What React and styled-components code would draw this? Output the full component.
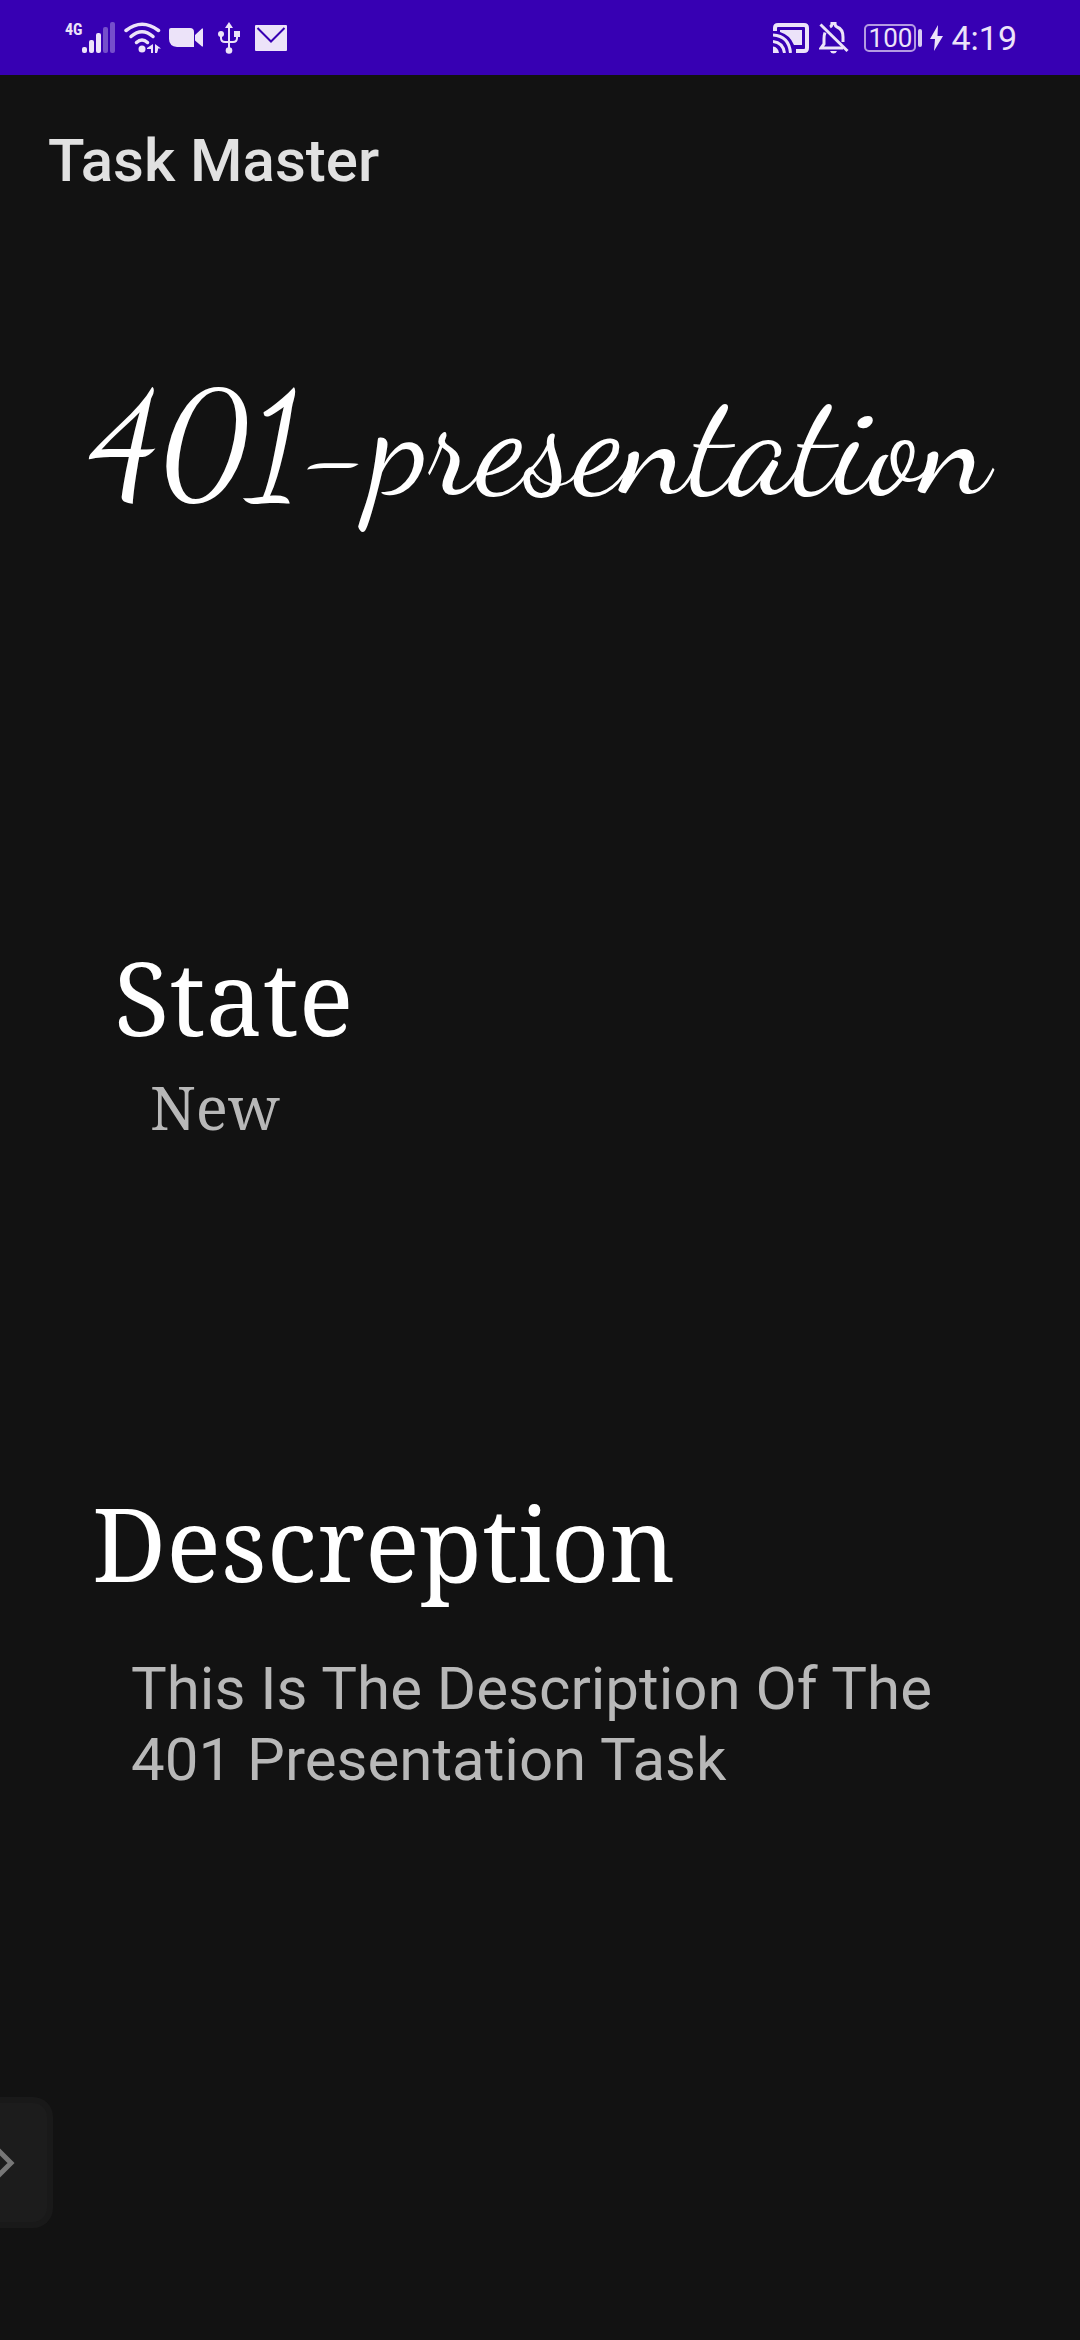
import React from "react";
import styled, { createGlobalStyle } from "styled-components";

const GlobalStyle = createGlobalStyle`
  *, *::before, *::after { box-sizing: border-box; }
  body { margin: 0; background: #121212; }
  h1, h2, p { margin: 0; font-weight: 400; }
`;

const ink = "#ece3f9";

const Screen = styled.div`
  position: relative;
  display: flex;
  flex-direction: column;
  min-height: 100vh;
  background: #121212;
  color: #fff;
  font-family: Roboto, "Open Sans", sans-serif;
`;

const StatusBar = styled.div`
  display: flex;
  align-items: center;
  justify-content: space-between;
  height: 75px;
  padding: 0 63px 0 65px;
  background: #3700b3;
  color: ${ink};
`;

const Group = styled.div`
  display: flex;
  align-items: center;
  gap: ${(p) => p.$gap}px;
`;

const Signal = styled.div`
  display: flex;
  align-items: flex-start;
  height: 32px;
`;

const Network = styled.span`
  width: 17px;
  font-family: "Roboto Condensed", Roboto, sans-serif;
  font-size: 16px;
  font-weight: 700;
  line-height: 16px;
`;

const Icon = styled.svg`
  display: block;
  flex: none;
`;

const Battery = styled.span`
  display: flex;
  align-items: center;
  justify-content: center;
  width: 52px;
  height: 28px;
  border: 2px solid #b49be2;
  border-radius: 5px;
  font-size: 26px;
  line-height: 26px;
`;

const BatteryTip = styled.span`
  width: 4px;
  height: 18px;
  border-radius: 2px;
  background: #d9ccf2;
`;

const Clock = styled.time`
  font-size: 34px;
  line-height: 40px;
`;

const AppBar = styled.header`
  display: flex;
  align-items: center;
  height: 172px;
  padding: 0 48px;
`;

const AppTitle = styled.h1`
  font-size: 60px;
  font-weight: 500;
  line-height: 70px;
  color: #e1e1e1;
`;

const TaskTitle = styled.h2`
  padding: 114px 90px 0;
  font-family: "Dancing Script", cursive;
  font-size: 144px;
  line-height: 168px;
  white-space: nowrap;
`;

const Section = styled.section`
  padding: ${(p) => p.$top}px 88px 0 ${(p) => p.$left}px;
`;

const SectionTitle = styled.h2`
  font-family: "Noto Serif", "Droid Serif", "DejaVu Serif", serif;
  font-size: 102px;
  line-height: 140px;
`;

const Value = styled.p`
  padding: ${(p) => p.$top}px 0 0 ${(p) => p.$indent}px;
  font-family: ${(p) =>
    p.$serif ? '"Noto Serif", "Droid Serif", "DejaVu Serif", serif' : "inherit"};
  font-size: 60px;
  line-height: 71px;
  color: #b8b8b8;
`;

const Handle = styled.button`
  position: absolute;
  left: 0;
  bottom: 112px;
  display: flex;
  align-items: center;
  width: 53px;
  height: 131px;
  padding: 0;
  border: 6px solid #191919;
  border-left: 0;
  border-radius: 0 20px 20px 0;
  background: #1c1c1c;
`;

function SignalIcon() {
  return (
    <Icon width="34" height="32" viewBox="0 0 34 32" fill={ink}>
      <rect x="0" y="25" width="5" height="6" rx="2" />
      <rect x="7" y="18" width="5" height="13" rx="2" />
      <rect x="14" y="11" width="5" height="20" rx="2" />
      <rect x="21" y="5" width="5" height="26" rx="2" opacity=".35" />
      <rect x="28" y="0" width="5" height="31" rx="2" opacity=".35" />
    </Icon>
  );
}

function WifiIcon() {
  return (
    <Icon width="37" height="32" viewBox="0 0 37 32" fill="none" stroke={ink} strokeWidth="3.500" strokeLinecap="round">
      <path d="M2 8.500Q18-4 34.500 8.500" />
      <path d="M7 14.500Q18 5 29 14.500" />
      <path d="M12.500 20.500Q18 15.500 23.500 20.500" />
      <circle cx="18" cy="27" r="3.500" fill={ink} stroke="none" />
      <path d="M29 22v9h-2v-4h-4v-1zM31 22l6 4.500h-3V28l-1 3h-2z" fill={ink} stroke="none" />
    </Icon>
  );
}

function VideoIcon() {
  return (
    <Icon width="34" height="20" viewBox="0 0 34 20" fill={ink}>
      <path d="M2 0h19q4 0 4 4v15H8Q0 18 0 11V2q0-2 2-2zM26 7l7-6.500h1v18h-1l-7-6z" />
    </Icon>
  );
}

function UsbIcon() {
  return (
    <Icon width="22" height="32" viewBox="0 0 22 32" fill={ink}>
      <path d="M11 5v22M3 12v4q0 4 4 4h8q4 0 4-4v-4" fill="none" stroke={ink} strokeWidth="2" />
      <path d="M11 0l4 6H7z" />
      <circle cx="3" cy="12" r="3" />
      <rect x="16" y="9" width="6" height="6" />
      <circle cx="11" cy="28.500" r="3.300" />
    </Icon>
  );
}

function MailIcon() {
  return (
    <Icon width="32" height="26" viewBox="0 0 32 26">
      <rect width="32" height="26" rx="1" fill={ink} />
      <path d="M2.500 3L16 16.500 29.500 3" fill="none" stroke="#3700b3" strokeWidth="2" />
    </Icon>
  );
}

function CastIcon() {
  return (
    <Icon width="36" height="30" viewBox="0 0 36 30" fill="none" stroke={ink}>
      <path d="M2 8V5q0-3 3-3h26q3 0 3 3v20q0 3-3 3h-8" strokeWidth="4" />
      <path d="M7 7h22v15h-8Q17 12 7 9z" fill={ink} stroke="none" />
      <path d="M0 12Q16 13 17.500 30M0 18.500Q10 19.500 11.500 30" strokeWidth="3" />
      <path d="M0 23.500q5 .5 6 6.500H0z" fill={ink} stroke="none" />
    </Icon>
  );
}

function MutedBellIcon() {
  return (
    <Icon width="30" height="32" viewBox="0 0 30 32" fill="none" stroke={ink} strokeWidth="3">
      <path d="M6 10.500Q5 13 5 17v5l-3 4h22M11 5q2-1 2-3.500h3Q16 4 18 5q6 2 6 10v5" />
      <path d="M1.500 2.500l27 26.500" />
      <path d="M11 29h7q-1 2.500-3.500 2.500T11 29z" fill={ink} stroke="none" />
    </Icon>
  );
}

function BoltIcon() {
  return (
    <Icon width="13" height="26" viewBox="0 0 13 26" fill={ink}>
      <path d="M8 0L0 14h5L4 26l9-15H7.500z" />
    </Icon>
  );
}

export default function App() {
  return (
    <>
      <GlobalStyle />
      <Screen>
        <StatusBar>
          <Group $gap={15}>
            <Group $gap={8}>
              <Signal>
                <Network>4G</Network>
                <SignalIcon />
              </Signal>
              <WifiIcon />
              <VideoIcon />
            </Group>
            <UsbIcon />
            <MailIcon />
          </Group>
          <Group $gap={15}>
            <Group $gap={10}>
              <CastIcon />
              <MutedBellIcon />
            </Group>
            <Group $gap={8}>
              <Group $gap={2}>
                <Battery>100</Battery>
                <BatteryTip />
              </Group>
              <BoltIcon />
              <Clock>4:19</Clock>
            </Group>
          </Group>
        </StatusBar>
        <AppBar>
          <AppTitle>Task Master</AppTitle>
        </AppBar>
        <main>
          <TaskTitle>401-presentation</TaskTitle>
          <Section $top={398} $left={114}>
            <SectionTitle>State</SectionTitle>
            <Value $top={5} $indent={36} $serif>New</Value>
          </Section>
          <Section $top={330} $left={92}>
            <SectionTitle>Descreption</SectionTitle>
            <Value $top={40} $indent={39}>This Is The Description Of The 401 Presentation Task</Value>
          </Section>
        </main>
        <Handle aria-label="Open side panel">
          <Icon width="16" height="32" viewBox="0 0 16 32" fill="none" stroke="#777" strokeWidth="5">
            <path d="M-5 0L11 16-5 32" />
          </Icon>
        </Handle>
      </Screen>
    </>
  );
}
